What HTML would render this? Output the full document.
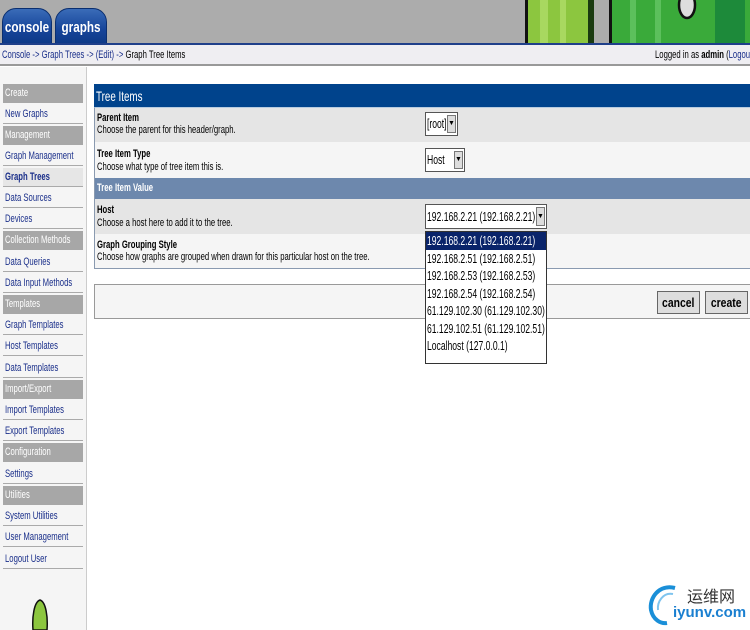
<!DOCTYPE html>
<html><head><meta charset="utf-8"><style>
*{margin:0;padding:0;box-sizing:border-box}
body{width:750px;height:630px;overflow:hidden;background:#fff;font-family:"Liberation Sans",sans-serif;font-size:10px;color:#000;position:relative}
.a{position:absolute}
.s{display:inline-block;transform:scaleX(.7);transform-origin:left center;white-space:nowrap}
.d{display:inline-block;transform:scaleX(.66);transform-origin:left center;white-space:nowrap}
.tab{position:absolute;top:8px;height:36px;background:linear-gradient(#3a6cb8,#16449a 60%,#0e3a88);border-radius:14px 14px 0 0;border:1px solid #0b2f70;color:#fff;font-size:15px;font-weight:bold;line-height:38px;overflow:hidden}
.tab span{display:block;margin:0 -30px;text-align:center;transform:scaleX(.78);white-space:nowrap}
.side{position:absolute;left:0;top:67px;width:87px;height:563px;background:#f5f5f5;border-right:1px solid #ccc}
.it{position:absolute;left:3px;width:80px;height:19px;line-height:19px;padding-left:2px;font-size:11px;color:#1a2f8a;border-bottom:1px solid #aaa}
.hd{background:#a7a7a7;color:#fff;border-bottom:none}
.row{position:absolute;left:94px;width:656px;border-left:1px solid #8a9ab0}
.lbl{position:absolute;left:2px;font-size:11px;line-height:11px}
.opt{height:17.5px;line-height:17.5px;padding-left:1px;font-size:13px;overflow:hidden}
.sel{position:absolute;background:#fff;border:1px solid #555;font-size:13px;padding-left:1px;overflow:hidden}
.arr{position:absolute;right:1px;top:2px;width:9px;background:#ddd;border:1px solid #777;font-size:7px;text-align:center}
.btn{position:absolute;top:291px;width:43px;height:23px;background:#ddd;border:1px solid #666;font-weight:bold;font-size:13px;line-height:21px;text-align:center}
.btn span{display:inline-block;transform:scaleX(.8)}
</style></head><body>
<div class="a" style="left:0;top:0;width:750px;height:44px;background:#acacac"></div>
<svg class="a" style="left:520px;top:0" width="230" height="44">
<rect x="5" y="0" width="68" height="44" fill="#8cc63f"/>
<rect x="20" y="0" width="8" height="44" fill="#a8d860"/><rect x="40" y="0" width="6" height="44" fill="#a8d860"/>
<rect x="5" y="0" width="3" height="44" fill="#111"/>
<rect x="68" y="0" width="6" height="44" fill="#1a3a10"/>
<rect x="90" y="0" width="140" height="44" fill="#3aaa3a"/>
<rect x="110" y="0" width="6" height="44" fill="#5cc05c"/><rect x="135" y="0" width="6" height="44" fill="#5cc05c"/><rect x="195" y="0" width="30" height="44" fill="#1d8a3a"/>
<rect x="89" y="0" width="3" height="44" fill="#111"/>
<ellipse cx="167" cy="5" rx="8" ry="13" fill="#ddd" stroke="#111" stroke-width="2.5"/>
</svg>
<div class="tab" style="left:2px;width:50px"><span>console</span></div>
<div class="tab" style="left:55px;width:52px"><span>graphs</span></div>
<div class="a" style="left:0;top:43px;width:750px;height:2px;background:#1f3f8a"></div>
<div class="a" style="left:0;top:45px;width:750px;height:21px;background:#efeef2;border-bottom:2px solid #999"></div>
<div class="a" style="left:2px;top:49px;font-size:11px"><span class="s" style="color:#1a2f8a">Console -&gt; Graph Trees -&gt; (Edit) -&gt; <span style="color:#000">Graph Tree Items</span></span></div>
<div class="a" style="left:655px;top:49px;font-size:11px"><span class="s">Logged in as <b>admin</b> (<span style="color:#1a2f8a">Logout</span>)</span></div>

<div class="side">
<div class="it hd" style="top:17px"><span class="s">Create</span></div>
<div class="it" style="top:38px"><span class="s">New Graphs</span></div>
<div class="it hd" style="top:59px"><span class="s">Management</span></div>
<div class="it" style="top:80px"><span class="s">Graph Management</span></div>
<div class="it" style="top:101px;font-weight:bold;background:#e6e6e6"><span class="s">Graph Trees</span></div>
<div class="it" style="top:122px"><span class="s">Data Sources</span></div>
<div class="it" style="top:143px"><span class="s">Devices</span></div>
<div class="it hd" style="top:164px"><span class="s">Collection Methods</span></div>
<div class="it" style="top:186px"><span class="s">Data Queries</span></div>
<div class="it" style="top:207px"><span class="s">Data Input Methods</span></div>
<div class="it hd" style="top:228px"><span class="s">Templates</span></div>
<div class="it" style="top:249px"><span class="s">Graph Templates</span></div>
<div class="it" style="top:270px"><span class="s">Host Templates</span></div>
<div class="it" style="top:292px"><span class="s">Data Templates</span></div>
<div class="it hd" style="top:313px"><span class="s">Import/Export</span></div>
<div class="it" style="top:334px"><span class="s">Import Templates</span></div>
<div class="it" style="top:355px"><span class="s">Export Templates</span></div>
<div class="it hd" style="top:376px"><span class="s">Configuration</span></div>
<div class="it" style="top:398px"><span class="s">Settings</span></div>
<div class="it hd" style="top:419px"><span class="s">Utilities</span></div>
<div class="it" style="top:440px"><span class="s">System Utilities</span></div>
<div class="it" style="top:461px"><span class="s">User Management</span></div>
<div class="it" style="top:483px"><span class="s">Logout User</span></div>
<svg class="a" style="left:20px;top:530px" width="40" height="33"><path d="M13 33 C12 20 14 5 20 3 C26 5 28 20 27 33 Z" fill="#8cc63f" stroke="#111" stroke-width="1.5"/></svg>
</div>

<div class="row" style="top:84px;height:23px;background:#00438c;color:#fff;font-size:14px;line-height:24px;padding-left:2px;border-left:none"><span class="s">Tree Items</span></div>
<div class="row" style="top:107px;height:35px;background:#e5e5e5;border-top:1px solid #b8cce0"><div class="lbl" style="top:5px"><span class="s"><b>Parent Item</b></span></div><div class="lbl" style="top:17px"><span class="s">Choose the parent for this header/graph.</span></div></div>
<div class="row" style="top:142px;height:36px;background:#f5f5f5"><div class="lbl" style="top:7px"><span class="s"><b>Tree Item Type</b></span></div><div class="lbl" style="top:20px"><span class="s">Choose what type of tree item this is.</span></div></div>
<div class="row" style="top:178px;height:21px;background:#6d88ad;color:#fff;line-height:21px;padding-left:2px;font-size:11px"><span class="s" style="font-weight:bold">Tree Item Value</span></div>
<div class="row" style="top:199px;height:35px;background:#e5e5e5"><div class="lbl" style="top:6px"><span class="s"><b>Host</b></span></div><div class="lbl" style="top:19px"><span class="s">Choose a host here to add it to the tree.</span></div></div>
<div class="row" style="top:234px;height:35px;background:#f5f5f5;border-bottom:1px solid #8a9ab0"><div class="lbl" style="top:6px"><span class="s"><b>Graph Grouping Style</b></span></div><div class="lbl" style="top:18px"><span class="s">Choose how graphs are grouped when drawn for this particular host on the tree.</span></div></div>
<div class="row" style="top:284px;height:35px;background:#f5f5f5;border:1px solid #999;border-right:none"></div>

<div class="sel" style="left:425px;top:112px;width:33px;height:24px;line-height:22px"><span class="d">[root]</span><div class="arr" style="height:18px;line-height:16px">▼</div></div>
<div class="sel" style="left:425px;top:148px;width:40px;height:24px;line-height:22px"><span class="d">Host</span><div class="arr" style="height:18px;line-height:16px">▼</div></div>
<div class="sel" style="left:425px;top:204px;width:122px;height:25px;line-height:23px"><span class="d">192.168.2.21 (192.168.2.21)</span><div class="arr" style="height:19px;line-height:17px">▼</div></div>
<div class="a" style="left:425px;top:231px;width:122px;height:133px;background:#fff;border:1px solid #333">
<div class="opt" style="background:#0a246a;color:#fff"><span class="d">192.168.2.21 (192.168.2.21)</span></div>
<div class="opt"><span class="d">192.168.2.51 (192.168.2.51)</span></div>
<div class="opt"><span class="d">192.168.2.53 (192.168.2.53)</span></div>
<div class="opt"><span class="d">192.168.2.54 (192.168.2.54)</span></div>
<div class="opt"><span class="d">61.129.102.30 (61.129.102.30)</span></div>
<div class="opt"><span class="d">61.129.102.51 (61.129.102.51)</span></div>
<div class="opt"><span class="d">Localhost (127.0.0.1)</span></div>
</div>
<div class="btn" style="left:657px"><span>cancel</span></div>
<div class="btn" style="left:705px"><span>create</span></div>

<svg class="a" style="left:645px;top:582px" width="40" height="44"><path d="M30 6 C14 2 4 16 6 28 C8 38 16 42 22 41" fill="none" stroke="#1a8fd8" stroke-width="4"/><path d="M28 12 C18 10 12 20 13 28" fill="none" stroke="#7fc4ee" stroke-width="2"/></svg>
<div class="a" style="left:687px;top:583px;font-size:16px;color:#333;font-family:'Liberation Sans','Noto Sans CJK SC',sans-serif">运维网</div>
<div class="a" style="left:673px;top:604px;font-size:15px;font-weight:bold;color:#1a7fd0">iyunv.com</div>
</body></html>
